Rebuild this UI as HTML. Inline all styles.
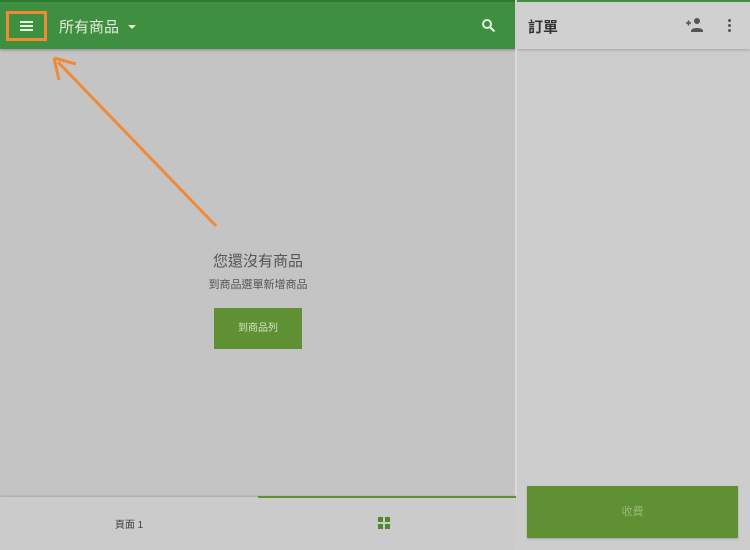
<!DOCTYPE html>
<html><head><meta charset="utf-8"><style>
*{margin:0;padding:0;box-sizing:border-box}
body{width:750px;height:550px;overflow:hidden;background:#c4c4c4;font-family:"Liberation Sans","Noto Sans CJK TC",sans-serif;position:relative}
.abs{position:absolute}
</style></head><body>
<div class="abs" style="left:0;top:0;width:516px;height:49px;background:#3e8f3f;border-top:2px solid #2f7a31;box-shadow:0 1px 3px rgba(0,0,0,.3)"></div>
<div class="abs" style="left:6px;top:11px;width:41px;height:30px;border:3px solid #f08a35"></div>
<div class="abs" style="left:20px;top:21px;width:13px;height:2px;background:#e6efe0;box-shadow:0 4px 0 #e6efe0,0 8px 0 #e6efe0"></div>
<div class="abs" style="left:59px;top:16px;color:#e3ecdc;font-size:15px">所有商品</div>
<div class="abs" style="left:128px;top:25px;border-left:4px solid transparent;border-right:4px solid transparent;border-top:4px solid #e3ecdc"></div>
<svg class="abs" style="left:481px;top:18px" width="15" height="15" viewBox="0 0 15 15"><circle cx="6" cy="6" r="4" fill="none" stroke="#e3ecdc" stroke-width="2"/><path d="M9 9l4.5 4.5" stroke="#e3ecdc" stroke-width="2.2"/></svg>
<div class="abs" style="left:515px;top:0;width:2px;height:550px;background:#dadada"></div>
<div class="abs" style="left:517px;top:0;width:233px;height:550px;background:#cdcdcd"></div>
<div class="abs" style="left:517px;top:0;width:233px;height:49px;background:#d0d0d0;border-top:2px solid #3e8f3f;box-shadow:0 1px 3px rgba(0,0,0,.2)"></div>
<div class="abs" style="left:528px;top:16px;color:#333;font-size:15px;font-weight:bold">訂單</div>
<svg class="abs" style="left:685px;top:17px" width="20" height="16" viewBox="0 0 20 16"><path d="M1 6h5M3.5 3.5v5" stroke="#555" stroke-width="1.6"/><circle cx="12" cy="4" r="3" fill="#555"/><path d="M6 14c0-4 12-4 12 0v1H6z" fill="#555"/></svg>
<div class="abs" style="left:728px;top:19px;width:3px;height:3px;background:#555;border-radius:50%;box-shadow:0 5px 0 #555,0 10px 0 #555"></div>
<svg class="abs" style="left:50px;top:52px" width="170" height="178"><path d="M166 174L8 10" stroke="#f08a35" stroke-width="3"/><path d="M4 6L26 12M4 6L9 28" stroke="#f08a35" stroke-width="3" fill="none"/></svg>
<div class="abs" style="left:0;top:250px;width:516px;text-align:center;color:#555;font-size:15px">您還沒有商品</div>
<div class="abs" style="left:0;top:276px;width:516px;text-align:center;color:#555;font-size:11px">到商品選單新增商品</div>
<div class="abs" style="left:214px;top:308px;width:88px;height:41px;background:#5f9033;color:#d6e3c8;font-size:10px;text-align:center;line-height:41px">到商品列</div>
<div class="abs" style="left:0;top:497px;width:516px;height:53px;background:#cbcbcb;box-shadow:0 -1px 2px rgba(0,0,0,.15)"></div>
<div class="abs" style="left:258px;top:496px;width:258px;height:2px;background:#5f9033"></div>
<div class="abs" style="left:0;top:516px;width:258px;text-align:center;color:#444;font-size:10px">頁面 1</div>
<div class="abs" style="left:378px;top:517px;width:5px;height:5px;background:#4e8a2e;box-shadow:7px 0 0 #4e8a2e,0 7px 0 #4e8a2e,7px 7px 0 #4e8a2e"></div>
<div class="abs" style="left:527px;top:486px;width:211px;height:52px;background:#5f9033;color:#9ab97c;font-size:11px;text-align:center;line-height:52px;box-shadow:0 1px 2px rgba(0,0,0,.2)">收費</div>
</body></html>
